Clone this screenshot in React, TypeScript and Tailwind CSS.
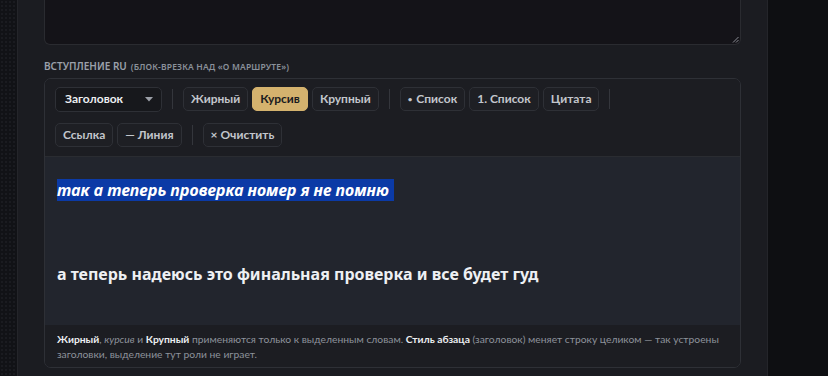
import React from "react";

const btn =
  "h-[24px] px-[7px] rounded-[5px] border border-[#2e3036] bg-[#1e1f24] text-[12px] font-bold text-[#c3c6cc] leading-none flex items-center";

function Sep() {
  return <div className="w-px h-[20px] bg-[#34363c] mx-[6px]" />;
}

function Group({ children, sep = true }: { children: React.ReactNode; sep?: boolean }) {
  return (
    <div className="flex items-center gap-[4px]">
      {children}
      {sep && <Sep />}
    </div>
  );
}

function Toolbar() {
  return (
    <div
      className="flex flex-wrap items-center gap-x-[4px] gap-y-[11px] px-[10px] pt-[8px] pb-[9px] bg-[#1c1d22] border-b border-[#2a2c31]"
      style={{ fontFamily: 'Lato, "Noto Sans", sans-serif' }}
    >
      <Group>
        <div className="h-[25px] w-[107px] rounded-[5px] border border-[#2e3036] bg-[#17181c] flex items-center justify-between pl-[9px] pr-[8px]">
          <span className="text-[12px] font-bold text-[#eceef1]">Заголовок</span>
          <svg width="8" height="5" viewBox="0 0 8 5">
            <path d="M0 0h8L4 4.5z" fill="#9ca0a8" />
          </svg>
        </div>
      </Group>
      <Group>
        <button className={btn}>Жирный</button>
        <button className="h-[24px] px-[7px] rounded-[5px] border border-[#d4b26e] bg-[#d4b26e] text-[12px] font-bold text-[#1a1b1f] leading-none flex items-center">
          Курсив
        </button>
        <button className={btn}>Крупный</button>
      </Group>
      <Group>
        <button className={btn}>
          <span className="text-[8px] mr-[4px]">•</span>Список
        </button>
        <button className={btn}>1. Список</button>
        <button className={btn}>Цитата</button>
      </Group>
      <Group>
        <button className={btn}>Ссылка</button>
        <button className={btn}>— Линия</button>
      </Group>
      <Group sep={false}>
        <button className={btn}>× Очистить</button>
      </Group>
    </div>
  );
}

export default function App() {
  return (
    <div
      className="w-[828px] h-[376px] overflow-hidden flex bg-[#0e0f12]"
      style={{ fontFamily: '"Noto Sans", "Open Sans", sans-serif' }}
    >
      <div
        className="w-[17px] shrink-0 bg-[#111216]"
        style={{
          backgroundImage: "radial-gradient(#1a1b20 1px, transparent 1px)",
          backgroundSize: "4px 4px",
        }}
      />
      <div className="w-[751px] shrink-0 bg-[#1b1c21] border-x border-[#24252a] px-[26px] -mt-[10px]">
        <div className="relative h-[55px] rounded-b-[6px] border border-t-0 border-[#2a2b30] bg-[#141318]">
          <svg className="absolute right-[1px] bottom-[1px]" width="7" height="7" viewBox="0 0 7 7">
            <path d="M6.5 1L1 6.5M6.5 4L4 6.5" stroke="#8a8d94" strokeWidth="1" />
          </svg>
        </div>
        <div className="mt-[16px] flex items-baseline gap-[4px] text-[#9ba1ab] leading-none">
          <span className="text-[10px] font-semibold">ВСТУПЛЕНИЕ RU</span>
          <span className="text-[8.5px] font-semibold tracking-[0.02em] text-[#8a909a]">
            (БЛОК-ВРЕЗКА НАД «О МАРШРУТЕ»)
          </span>
        </div>
        <div className="mt-[6px] h-[290px] rounded-[7px] border border-[#2e3036] overflow-hidden flex flex-col">
          <Toolbar />
          <div className="h-[168px] bg-[#22252d] px-[12px] pt-[20px]">
            <div className="text-[16px] font-bold italic text-white leading-[27px]">
              <span className="bg-[#0b3aa6] pr-[5px]">так а теперь проверка номер я не помню</span>
            </div>
            <div className="mt-[57px] text-[16px] font-bold text-[#eef0f3] leading-[27px]">
              а теперь надеюсь это финальная проверка и все будет гуд
            </div>
          </div>
          <div
            className="flex-1 bg-[#1c1d22] px-[12px] pt-[7px] text-[10.3px] leading-[15px] text-[#8d929b]"
            style={{ fontFamily: 'Lato, "Noto Sans", sans-serif' }}
          >
            <b className="text-[#eceef1]">Жирный</b>, <i>курсив</i> и{" "}
            <b className="text-[#eceef1]">Крупный</b> применяются только к выделенным словам.{" "}
            <b className="text-[#eceef1]">Стиль абзаца</b> (заголовок) меняет строку целиком — так
            устроены заголовки, выделение тут роли не играет.
          </div>
        </div>
      </div>
    </div>
  );
}
